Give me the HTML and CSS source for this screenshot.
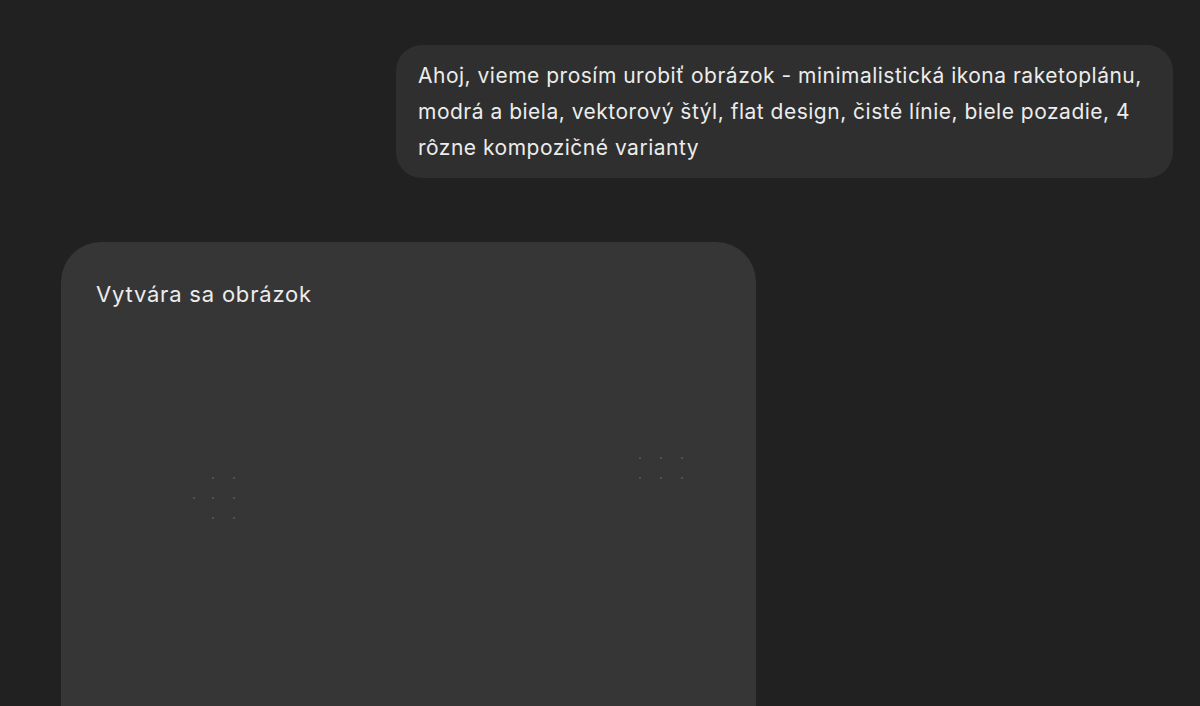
FILE: index.html
```html
<!DOCTYPE html>
<html lang="sk">
<head>
<meta charset="utf-8">
<link rel="stylesheet" href="styles.css">
</head>
<body>
<main class="thread">
  <div class="row row-user">
    <div class="bubble">Ahoj, vieme prosím urobiť obrázok - minimalistická ikona raketoplánu, modrá a biela, vektorový štýl, flat design, čisté línie, biele pozadie, 4 rôzne kompozičné varianty</div>
  </div>
  <div class="row row-assistant">
    <div class="gen-card">
      <div class="gen-title">Vytvára sa obrázok</div>
      <div class="dots dots-a">
        <span class="dot d1"></span><span class="dot d2"></span>
        <span class="dot d3"></span><span class="dot d4"></span><span class="dot d5"></span>
        <span class="dot d6"></span><span class="dot d7"></span>
      </div>
      <div class="dots dots-b">
        <span class="dot e1"></span><span class="dot e2"></span><span class="dot e3"></span>
        <span class="dot e4"></span><span class="dot e5"></span><span class="dot e6"></span>
      </div>
    </div>
  </div>
</main>
</body>
</html>
```

FILE: styles.css
```css
* { box-sizing: border-box; }
html, body {
  margin: 0;
  padding: 0;
  height: 100%;
  background: #212121;
  overflow: hidden;
}
body {
  font-family: Inter, "Noto Sans", "Liberation Sans", sans-serif;
  color: #ececec;
}
.thread {
  display: flex;
  flex-direction: column;
  height: 100%;
  padding: 45px 27px 0 61px;
}
.row { display: flex; }
.row-user { justify-content: flex-end; }
.bubble {
  width: 777px;
  background: #2f2f2f;
  border-radius: 26px;
  padding: 13px 22px 12px 22px;
  font-size: 21px;
  line-height: 36px;
  letter-spacing: 0.5px;
}
.row-assistant {
  margin-top: 64px;
  flex: 1;
  min-height: 0;
}
.gen-card {
  position: relative;
  width: 695px;
  height: 100%;
  background: #363636;
  border-radius: 40px 40px 0 0;
  padding: 37px 35px;
}
.gen-title {
  font-size: 22px;
  line-height: 30px;
  color: #ececec;
  letter-spacing: 0.8px;
}
.dots { position: absolute; }
.dots-a { left: 130px; top: 235px; }
.dots-b { left: 576px; top: 211px; }
.dot {
  position: absolute;
  width: 2px;
  height: 2px;
  border-radius: 50%;
  background: #5a5a5a;
}
.d1 { left: 21px; top: 0; }
.d2 { left: 42px; top: 0; }
.d3 { left: 2px; top: 20px; }
.d4 { left: 21px; top: 20px; }
.d5 { left: 42px; top: 20px; }
.d6 { left: 21px; top: 40px; }
.d7 { left: 42px; top: 40px; }
.e1 { left: 2px; top: 4px; }
.e2 { left: 23px; top: 4px; }
.e3 { left: 44px; top: 4px; }
.e4 { left: 2px; top: 24px; }
.e5 { left: 23px; top: 24px; }
.e6 { left: 44px; top: 24px; }
```
